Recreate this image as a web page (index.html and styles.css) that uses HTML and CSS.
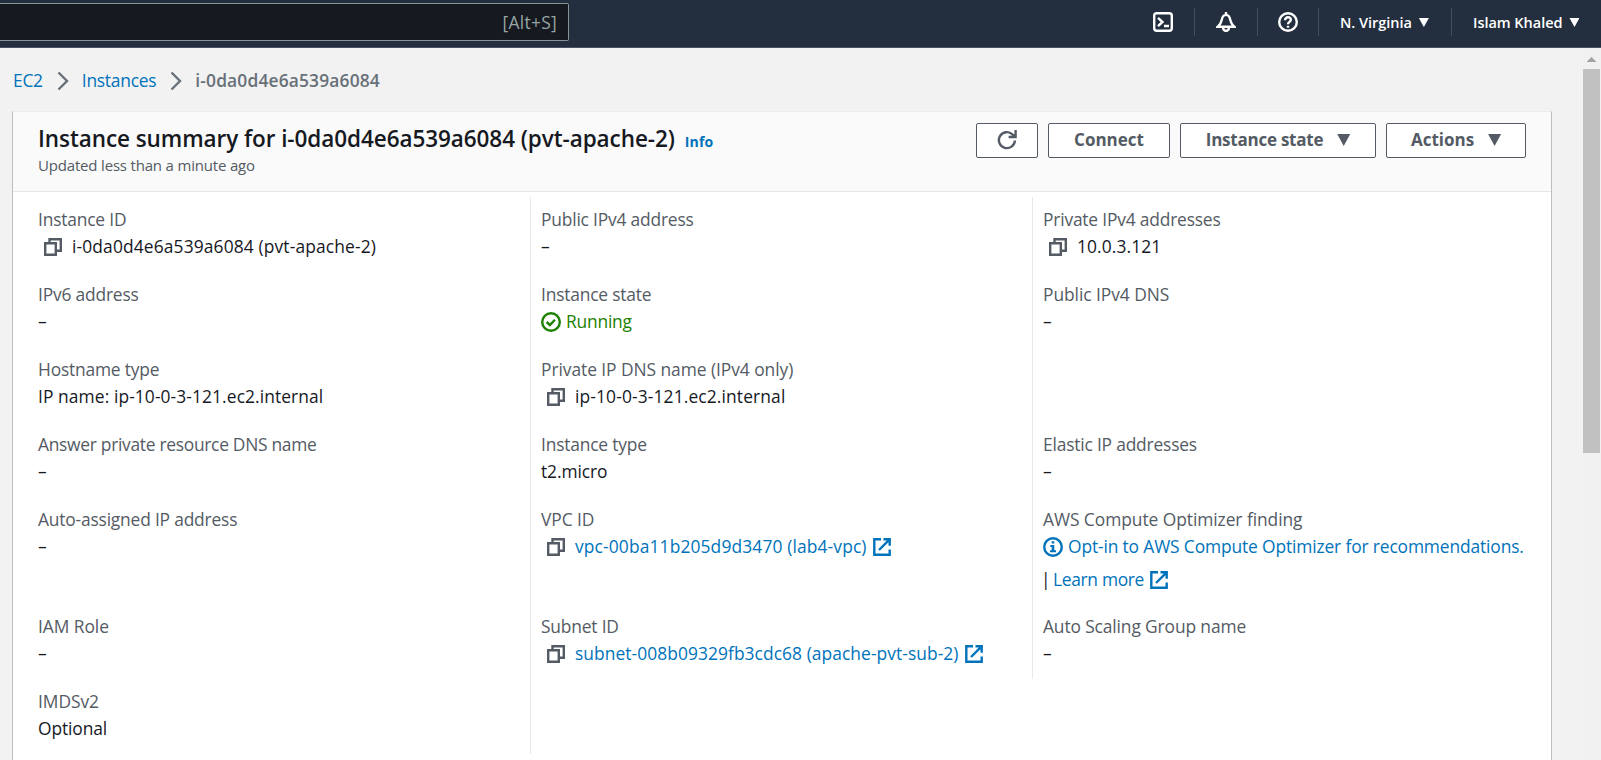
FILE: index.html
```
<!DOCTYPE html>
<html lang="en">
<head>
<meta charset="utf-8">
<title>Instance summary</title>
<link rel="stylesheet" href="styles.css">
</head>
<body>
<svg class="sprite" aria-hidden="true">
  <symbol id="copy" viewBox="0 0 18 18"><path d="M1.2 5.2h10.6v11.6H1.2z" /><path d="M5.5 5V1.3h11.3v11.4H12" /></symbol>
  <symbol id="ext" viewBox="0 0 18 18"><path d="M8 1.3H1.3v15.4h15.4V11.5M10.5 1.3h6.2v6.5M16.4 1.6 6 12" /></symbol>
  <symbol id="chev" viewBox="0 0 12 20"><path d="M1.5 1.5 10 10l-8.500 8.500" /></symbol>
</svg>
<header class="topbar">
  <div class="search"><span class="hint">[Alt+S]</span></div>
  <nav class="tools">
    <a class="tool shell"><svg class="glyph" viewBox="0 0 20 20"><rect x="1.200" y="1.200" width="17.600" height="17.600" rx="2.500"/><path d="M5 5.800 9.500 10 5 14.200M11 14h5"/></svg></a>
    <a class="tool bell"><svg class="glyph" viewBox="0 0 20 20"><path d="M10 0v3M1.800 14.700h16.400C15.800 12.800 15 11.500 14.300 8 13.700 4.800 12.500 2.900 10 2.900S6.300 4.800 5.700 8C5 11.500 4.200 12.800 1.800 14.700zM6.900 15c.2 2.500 1.300 3.900 3.100 3.900s2.900-1.400 3.100-3.900"/></svg></a>
    <a class="tool help"><svg class="glyph" viewBox="0 0 20 20"><circle cx="10" cy="10" r="8.800"/><path d="M7.100 8.200C7.100 6.300 8.200 5.300 10 5.300s2.900 1 2.900 2.500C12.900 9.900 10 9.700 10 12.300M10 13.700v2"/></svg></a>
    <a class="tool region">N. Virginia<i class="caret"></i></a>
    <a class="tool user">Islam Khaled<i class="caret"></i></a>
  </nav>
</header>
<div class="page">
  <main class="content">
    <nav class="crumbs">
      <a class="link">EC2</a><svg class="chev"><use href="#chev"/></svg><a class="link">Instances</a><svg class="chev"><use href="#chev"/></svg><span class="current">i-0da0d4e6a539a6084</span>
    </nav>
    <section class="card">
      <div class="card-head">
        <div class="titles">
          <h1 class="title">Instance summary for i-0da0d4e6a539a6084 (pvt-apache-2)<a class="info">Info</a></h1>
          <p class="updated">Updated less than a minute ago</p>
        </div>
        <div class="actions">
          <button class="btn refresh"><svg class="reload" viewBox="0 0 20 20"><path d="M17.900 10.500A8 8 0 1 1 15.400 4.300L18 6.500M18.600 0v7h-7"/></svg></button>
          <button class="btn connect">Connect</button>
          <button class="btn state">Instance state<i class="caret"></i></button>
          <button class="btn more">Actions<i class="caret"></i></button>
        </div>
      </div>
      <div class="grid">
        <div class="item"><div class="label">Instance ID</div><div class="value id"><svg class="copy"><use href="#copy"/></svg>i-0da0d4e6a539a6084 (pvt-apache-2)</div></div>
        <div class="item"><div class="label">Public IPv4 address</div><div class="value">–</div></div>
        <div class="item"><div class="label">Private IPv4 addresses</div><div class="value ip"><svg class="copy"><use href="#copy"/></svg>10.0.3.121</div></div>

        <div class="item"><div class="label">IPv6 address</div><div class="value">–</div></div>
        <div class="item"><div class="label">Instance state</div><div class="value running"><svg class="status" viewBox="0 0 20 20"><circle cx="10" cy="10" r="8.800"/><path d="m5.700 10 3.200 3 5-5.300"/></svg>Running</div></div>
        <div class="item"><div class="label wide">Public IPv4 DNS</div><div class="value">–</div></div>

        <div class="item"><div class="label">Hostname type</div><div class="value id name">IP name: ip-10-0-3-121.ec2.internal</div></div>
        <div class="item"><div class="label wide">Private IP DNS name (IPv4 only)</div><div class="value id"><svg class="copy"><use href="#copy"/></svg>ip-10-0-3-121.ec2.internal</div></div>
        <div class="item"></div>

        <div class="item"><div class="label tight">Answer private resource DNS name</div><div class="value">–</div></div>
        <div class="item"><div class="label">Instance type</div><div class="value">t2.micro</div></div>
        <div class="item"><div class="label">Elastic IP addresses</div><div class="value">–</div></div>

        <div class="item"><div class="label">Auto-assigned IP address</div><div class="value">–</div></div>
        <div class="item"><div class="label wide">VPC ID</div><div class="value id"><svg class="copy"><use href="#copy"/></svg><a class="link">vpc-00ba11b205d9d3470 (lab4-vpc)</a><svg class="ext"><use href="#ext"/></svg></div></div>
        <div class="item"><div class="label wide">AWS Compute Optimizer finding</div><div class="value link optin"><svg class="status" viewBox="0 0 20 20"><circle cx="10" cy="10" r="8.800"/><path class="solid" d="M8.700 4.200h2.600v2.400H8.700zM7.300 8h4v5.300H13v2H7v-2h1.700V10H7.300z"/></svg>Opt-in to AWS Compute Optimizer for recommendations.</div><div class="value learn"><span class="bar">|</span><a class="link">Learn more</a><svg class="ext"><use href="#ext"/></svg></div></div>

        <div class="item"><div class="label wide">IAM Role</div><div class="value">–</div></div>
        <div class="item"><div class="label">Subnet ID</div><div class="value id subnet"><svg class="copy"><use href="#copy"/></svg><a class="link">subnet-008b09329fb3cdc68 (apache-pvt-sub-2)</a><svg class="ext"><use href="#ext"/></svg></div></div>
        <div class="item"><div class="label group">Auto Scaling Group name</div><div class="value">–</div></div>

        <div class="item"><div class="label wide">IMDSv2</div><div class="value">Optional</div></div>
        <div class="item"></div>
      </div>
    </section>
  </main>
  <div class="scroll"><i class="up"></i><div class="thumb"></div></div>
</div>
</body>
</html>
```
FILE: styles.css
```
* { box-sizing: border-box; }
body {
  margin: 0;
  height: 760px;
  overflow: hidden;
  background: #f2f2f2;
  color: #16191f;
  font: 17.4px/27px "Open Sans", "Noto Sans", sans-serif;
}
svg { fill: none; stroke: currentColor; stroke-width: 2.4; flex: none; }
.sprite { display: none; }
.link { color: #0073bb; }

.topbar {
  display: flex;
  justify-content: space-between;
  height: 48px;
  padding-top: 3px;
  background: #232f3e;
  border-bottom: 1px solid #4a5068;
}
.search {
  display: flex;
  justify-content: flex-end;
  align-items: center;
  width: 569px;
  height: 38px;
  padding: 0 11px 0 0;
  background: #16191f;
  border: 1px solid #879596;
  border-left: 0;
  border-radius: 0 2px 2px 0;
}
.hint { color: #95a5a6; letter-spacing: .3px; }
.tools { display: flex; padding-top: 5px; height: 33px; color: #fff; }
.tool {
  display: flex;
  align-items: center;
  height: 28px;
  font-size: 14.500px;
  font-weight: 600;
  letter-spacing: -.03px;
}
.tool + .tool { border-left: 1px solid #414d5c; }
.glyph { width: 20px; height: 20px; }
.shell { width: 41px; }
.bell { width: 63px; padding-left: 21px; }
.help { width: 61px; padding-left: 20px; }
.region { width: 133px; padding-left: 21px; }
.user { width: 150px; padding-left: 21px; }
.caret {
  width: 10px;
  height: 9px;
  margin-left: 7px;
  background: currentColor;
  clip-path: polygon(0 0, 100% 0, 50% 100%);
}
.tool .caret { margin-top: 1px; }

.page { display: flex; height: 712px; }
.content { flex: 1; padding: 0 31px 0 12px; }
.crumbs { display: flex; align-items: center; height: 63px; padding: 2px 0 0 1px; letter-spacing: -.25px; }
.chev { width: 12px; height: 20px; margin: 1px 13px 0 14px; color: #687078; }
.current { color: #687078; font-weight: 600; letter-spacing: .15px; }

.card {
  height: 660px;
  background: #fff;
  border: 1px solid #b9bfc2;
  border-top-color: #eaeded;
}
.card-head {
  display: flex;
  justify-content: space-between;
  height: 80px;
  padding: 11px 25px 0 25px;
  background: #fafafa;
  border-bottom: 1px solid #e3e7e7;
}
.title { display: flex; align-items: baseline; margin: 0; padding-top: 1px; font-size: 22.500px; font-weight: 600; line-height: 30px; letter-spacing: -.07px; }
.info { margin-left: 10px; color: #0073bb; font-size: 14px; font-weight: 700; letter-spacing: .1px; }
.updated { margin: -4px 0 0; color: #545b64; font-size: 15px; line-height: 24px; letter-spacing: -.18px; }
.actions { display: flex; gap: 10px; }
.btn {
  display: flex;
  align-items: center;
  justify-content: center;
  height: 35px;
  padding: 0 0 1px;
  background: #fff;
  border: 1px solid #545b64;
  border-radius: 2px;
  color: #545b64;
  font: 700 17px/24px "Open Sans", "Noto Sans", sans-serif;
}
.btn .caret { width: 13px; height: 12px; margin-left: 14px; }
.refresh { width: 62px; }
.reload { width: 20px; height: 20px; }
.connect { width: 122px; }
.state { width: 196px; letter-spacing: -.24px; }
.more { width: 140px; }

.grid {
  display: grid;
  grid-template-columns: 517px 502px 1fr;
  grid-template-rows: repeat(4, 75px) 107px repeat(2, 75px);
  padding-top: 5px;
}
.item { padding: 9px 0 0 25px; white-space: nowrap; }
.item:nth-child(3n+2), .item:nth-child(3n) { padding-left: 10px; border-left: 1px solid #e6eaea; }
.label { color: #545b64; letter-spacing: -.19px; }
.wide { letter-spacing: -.06px; }
.group { letter-spacing: -.13px; }
.tight { letter-spacing: -.29px; }
.value { display: flex; align-items: center; letter-spacing: -.1px; }
.id { letter-spacing: .13px; }
.name { letter-spacing: .09px; }
.subnet { letter-spacing: .06px; }
.ip { letter-spacing: .1px; }
.copy { width: 18px; height: 18px; margin: 1px 10px 0 6px; color: #545b64; }
.ext { width: 18px; height: 18px; margin: 1px 0 0 6px; color: #0073bb; }
.status { width: 20px; height: 20px; margin: 1px 5px 0 0; }
.solid { fill: currentColor; stroke: none; }
.running { color: #1d8102; letter-spacing: -.2px; }
.optin { letter-spacing: -.14px; }
.learn { margin-top: 6px; letter-spacing: -.32px; }
.bar { width: 10px; text-indent: -2px; }

.scroll { width: 18px; padding: 9px 1px 0 0; background: #f1f1f1; }
.up { display: block; width: 10px; height: 5px; margin: 0 auto 7px; background: #a3a3a3; clip-path: polygon(50% 0, 100% 100%, 0 100%); }
.thumb { height: 384px; background: #c1c1c1; }
```
